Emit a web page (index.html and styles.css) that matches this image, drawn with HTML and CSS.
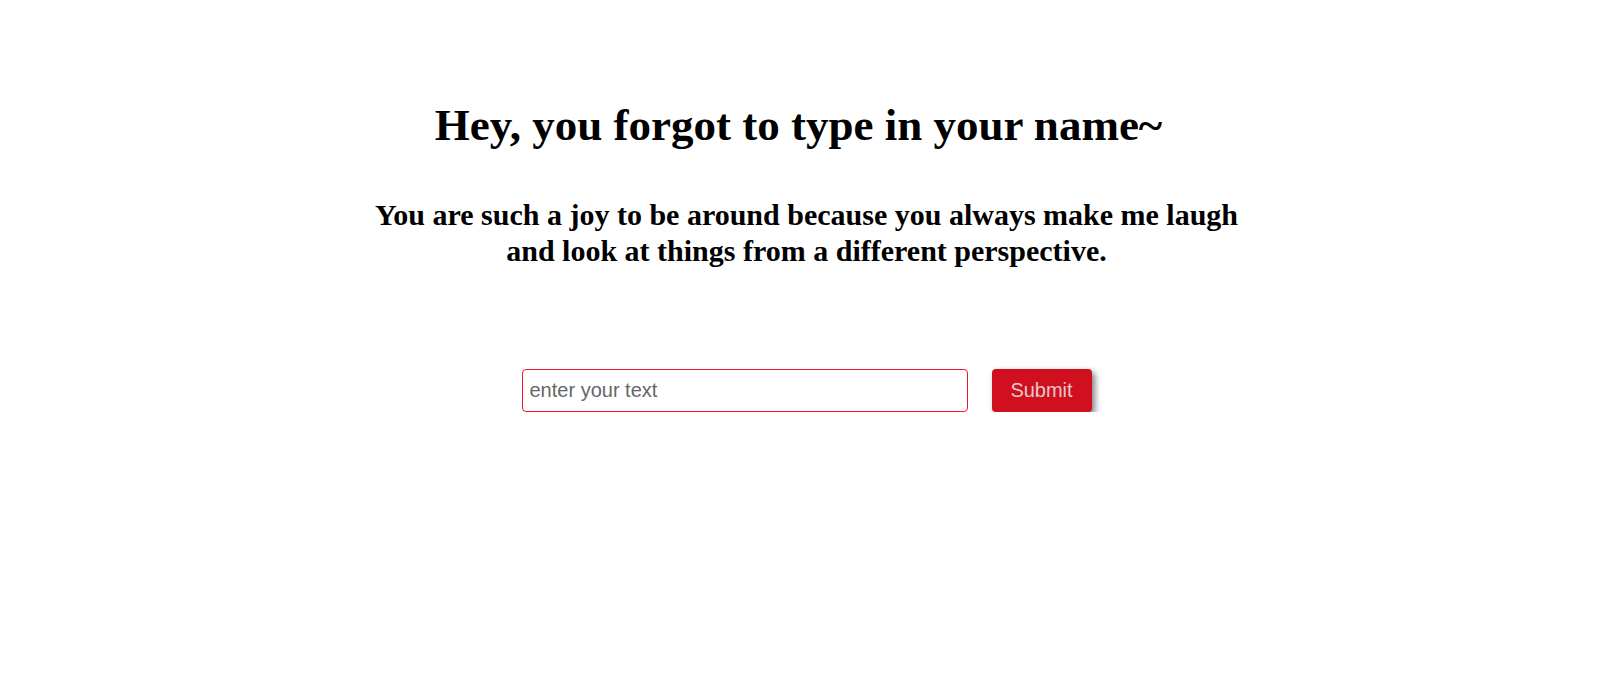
FILE: index.html
```html
<!DOCTYPE html>
<html>
<head>
<meta charset="utf-8">
<link rel="stylesheet" href="styles.css">
</head>
<body>
<main class="page">
  <h1 class="title">Hey, you forgot to type in your name~</h1>
  <h2 class="message">You are such a joy to be around because you always make me laugh<br>and look at things from a different perspective.</h2>
  <form class="form">
    <input class="field" type="text" placeholder="enter your text">
    <button class="submit" type="button">Submit</button>
  </form>
</main>
</body>
</html>
```
FILE: styles.css
```css
html, body {
  margin: 0;
  padding: 0;
  background: #fff;
}
.page {
  display: flex;
  flex-direction: column;
  align-items: center;
  padding: 97px 0 0 16px;
  font-family: "Liberation Serif", "Times New Roman", serif;
  color: #000;
  text-align: center;
}
.title {
  margin: 0 16px 0 0;
  font-size: 45px;
  line-height: 56px;
  font-weight: bold;
}
.message {
  margin: 44px 0 0;
  font-size: 30px;
  line-height: 36px;
  font-weight: bold;
}
.form {
  display: flex;
  gap: 24px;
  margin-top: 100px;
}
.field {
  box-sizing: border-box;
  width: 446px;
  height: 43px;
  border: 1px solid #f01a2c;
  border-radius: 4px;
  padding: 0 7px;
  font-family: "Liberation Sans", Arial, sans-serif;
  font-size: 20px;
  color: #333;
  outline: none;
}
.field::placeholder {
  color: #666;
}
.submit {
  box-sizing: border-box;
  width: 100px;
  height: 43px;
  border: none;
  border-radius: 4px;
  background: #d00f1f;
  color: #e6c9c9;
  font-family: "Liberation Sans", Arial, sans-serif;
  font-size: 20px;
  box-shadow: 3px 3px 6px rgba(0,0,0,0.5);
  cursor: pointer;
}
```
